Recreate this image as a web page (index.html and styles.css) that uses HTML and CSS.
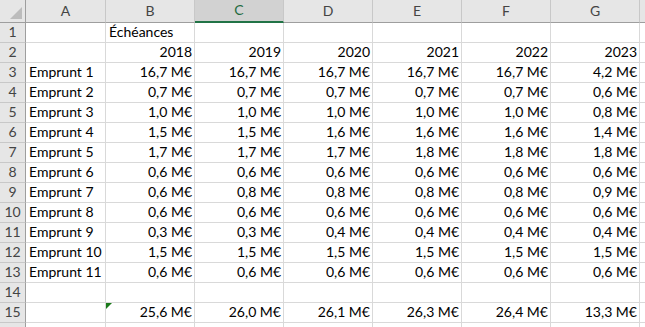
FILE: index.html
```html
<!DOCTYPE html>
<html lang="fr">
<head>
  <meta charset="UTF-8">
  <title>Échéances</title>
  <link rel="stylesheet" href="styles.css">
</head>
<body>
  <div class="sheet">
    <div class="hd corner"></div>
    <div class="hd col">A</div>
    <div class="hd col">B</div>
    <div class="hd col selected">C</div>
    <div class="hd col">D</div>
    <div class="hd col">E</div>
    <div class="hd col">F</div>
    <div class="hd col">G</div>
    <div class="hd col"></div>

    <div class="hd row">1</div>
    <div class="cell"></div>
    <div class="cell">Échéances</div>
    <div class="cell"></div><div class="cell"></div><div class="cell"></div><div class="cell"></div><div class="cell"></div><div class="cell"></div>

    <div class="hd row">2</div>
    <div class="cell"></div>
    <div class="cell num">2018</div>
    <div class="cell num">2019</div>
    <div class="cell num">2020</div>
    <div class="cell num">2021</div>
    <div class="cell num">2022</div>
    <div class="cell num">2023</div>
    <div class="cell"></div>

    <div class="hd row">3</div>
    <div class="cell">Emprunt 1</div>
    <div class="cell num">16,7 M€</div><div class="cell num">16,7 M€</div><div class="cell num">16,7 M€</div><div class="cell num">16,7 M€</div><div class="cell num">16,7 M€</div><div class="cell num">4,2 M€</div>
    <div class="cell"></div>

    <div class="hd row">4</div>
    <div class="cell">Emprunt 2</div>
    <div class="cell num">0,7 M€</div><div class="cell num">0,7 M€</div><div class="cell num">0,7 M€</div><div class="cell num">0,7 M€</div><div class="cell num">0,7 M€</div><div class="cell num">0,6 M€</div>
    <div class="cell"></div>

    <div class="hd row">5</div>
    <div class="cell">Emprunt 3</div>
    <div class="cell num">1,0 M€</div><div class="cell num">1,0 M€</div><div class="cell num">1,0 M€</div><div class="cell num">1,0 M€</div><div class="cell num">1,0 M€</div><div class="cell num">0,8 M€</div>
    <div class="cell"></div>

    <div class="hd row">6</div>
    <div class="cell">Emprunt 4</div>
    <div class="cell num">1,5 M€</div><div class="cell num">1,5 M€</div><div class="cell num">1,6 M€</div><div class="cell num">1,6 M€</div><div class="cell num">1,6 M€</div><div class="cell num">1,4 M€</div>
    <div class="cell"></div>

    <div class="hd row">7</div>
    <div class="cell">Emprunt 5</div>
    <div class="cell num">1,7 M€</div><div class="cell num">1,7 M€</div><div class="cell num">1,7 M€</div><div class="cell num">1,8 M€</div><div class="cell num">1,8 M€</div><div class="cell num">1,8 M€</div>
    <div class="cell"></div>

    <div class="hd row">8</div>
    <div class="cell">Emprunt 6</div>
    <div class="cell num">0,6 M€</div><div class="cell num">0,6 M€</div><div class="cell num">0,6 M€</div><div class="cell num">0,6 M€</div><div class="cell num">0,6 M€</div><div class="cell num">0,6 M€</div>
    <div class="cell"></div>

    <div class="hd row">9</div>
    <div class="cell">Emprunt 7</div>
    <div class="cell num">0,6 M€</div><div class="cell num">0,8 M€</div><div class="cell num">0,8 M€</div><div class="cell num">0,8 M€</div><div class="cell num">0,8 M€</div><div class="cell num">0,9 M€</div>
    <div class="cell"></div>

    <div class="hd row">10</div>
    <div class="cell">Emprunt 8</div>
    <div class="cell num">0,6 M€</div><div class="cell num">0,6 M€</div><div class="cell num">0,6 M€</div><div class="cell num">0,6 M€</div><div class="cell num">0,6 M€</div><div class="cell num">0,6 M€</div>
    <div class="cell"></div>

    <div class="hd row">11</div>
    <div class="cell">Emprunt 9</div>
    <div class="cell num">0,3 M€</div><div class="cell num">0,3 M€</div><div class="cell num">0,4 M€</div><div class="cell num">0,4 M€</div><div class="cell num">0,4 M€</div><div class="cell num">0,4 M€</div>
    <div class="cell"></div>

    <div class="hd row">12</div>
    <div class="cell">Emprunt 10</div>
    <div class="cell num">1,5 M€</div><div class="cell num">1,5 M€</div><div class="cell num">1,5 M€</div><div class="cell num">1,5 M€</div><div class="cell num">1,5 M€</div><div class="cell num">1,5 M€</div>
    <div class="cell"></div>

    <div class="hd row">13</div>
    <div class="cell">Emprunt 11</div>
    <div class="cell num">0,6 M€</div><div class="cell num">0,6 M€</div><div class="cell num">0,6 M€</div><div class="cell num">0,6 M€</div><div class="cell num">0,6 M€</div><div class="cell num">0,6 M€</div>
    <div class="cell"></div>

    <div class="hd row">14</div>
    <div class="cell"></div><div class="cell"></div><div class="cell"></div><div class="cell"></div><div class="cell"></div><div class="cell"></div><div class="cell"></div><div class="cell"></div>

    <div class="hd row">15</div>
    <div class="cell"></div>
    <div class="cell num flagged">25,6 M€</div>
    <div class="cell num">26,0 M€</div>
    <div class="cell num">26,1 M€</div>
    <div class="cell num">26,3 M€</div>
    <div class="cell num">26,4 M€</div>
    <div class="cell num">13,3 M€</div>
    <div class="cell"></div>

    <div class="hd row"></div>
    <div class="cell"></div><div class="cell"></div><div class="cell"></div><div class="cell"></div><div class="cell"></div><div class="cell"></div><div class="cell"></div><div class="cell"></div>
  </div>
</body>
</html>
```

FILE: styles.css
```css
body {
  margin: 0;
  padding: 0;
  background: #fff;
  font-family: 'Lato', 'Liberation Sans', sans-serif;
  font-size: 14px;
  color: #000;
  overflow: hidden;
}

.sheet {
  display: grid;
  grid-template-columns: 26px 80px repeat(6, 89px) 1fr;
  grid-template-rows: 23px;
  grid-auto-rows: 20px;
  width: 645px;
}

.sheet > div {
  box-sizing: border-box;
  border-right: 1px solid #d9d9d9;
  border-bottom: 1px solid #d9d9d9;
  display: flex;
  align-items: flex-end;
  padding: 0 2px 3px 3px;
  line-height: 15px;
  white-space: nowrap;
  overflow: hidden;
}

.sheet > .hd {
  background: #e6e6e6;
  color: #444;
  justify-content: center;
  padding: 0 0 3px 0;
}

.hd.col {
  border-right-color: #c8c8c8;
  border-bottom-color: #9e9e9e;
  padding-bottom: 4px;
}

.hd.row {
  border-right-color: #9e9e9e;
  border-bottom-color: #c8c8c8;
}

.hd.corner {
  position: relative;
  border-right-color: #9e9e9e;
  border-bottom-color: #9e9e9e;
}

.hd.corner::after {
  content: '';
  position: absolute;
  right: 3px;
  bottom: 3px;
  width: 12px;
  height: 12px;
  background: #bcbcbc;
  clip-path: polygon(100% 0, 100% 100%, 0 100%);
}

.hd.selected {
  background: #d2d2d2;
  color: #1e6b41;
  border-bottom: 2px solid #217346;
}

.num {
  justify-content: flex-end;
}

.flagged {
  position: relative;
}

.flagged::before {
  content: '';
  position: absolute;
  top: 0;
  left: 0;
  width: 6px;
  height: 6px;
  background: #1a7a1a;
  clip-path: polygon(0 0, 100% 0, 0 100%);
}
```
